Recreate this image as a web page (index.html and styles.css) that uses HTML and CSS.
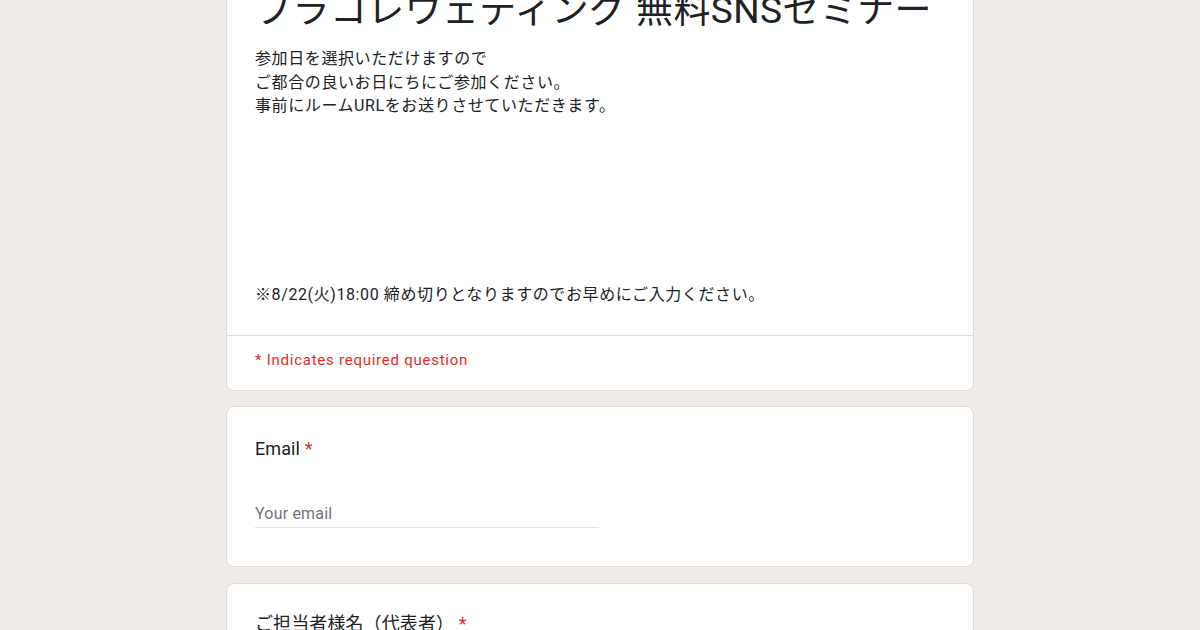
FILE: index.html
```html
<!DOCTYPE html>
<html lang="ja">
<head>
<meta charset="utf-8">
<link rel="stylesheet" href="styles.css">
</head>
<body>
<div class="page">
  <div class="card header">
    <div class="header-main">
      <h1 class="title">ブラコレウェディング 無料SNSセミナー</h1>
      <div class="desc">参加日を選択いただけますので
ご都合の良いお日にちにご参加ください。
事前にルームURLをお送りさせていただきます。







※8/22(火)18:00 締め切りとなりますのでお早めにご入力ください。</div>
    </div>
    <div class="required-note">* Indicates required question</div>
  </div>
  <div class="card question">
    <div class="q-title">Email <span class="star">*</span></div>
    <div class="input">Your email</div>
  </div>
  <div class="card question">
    <div class="q-title">ご担当者様名（代表者） <span class="star">*</span></div>
    <div class="input">Your answer</div>
  </div>
</div>
</body>
</html>
```
FILE: styles.css
```css
html, body {
  margin: 0;
  padding: 0;
  background: #f0ebe8;
  height: 630px;
  overflow: hidden;
}
body {
  font-family: Roboto, "Noto Sans CJK JP", sans-serif;
  color: #202124;
}
.page {
  width: 748px;
  margin: -14px auto 0;
  display: flex;
  flex-direction: column;
  gap: 15px;
}
.card {
  background: #fff;
  border: 1px solid #dadce0;
  border-radius: 8px;
}
.header-main {
  padding: 0 28px 28px 28px;
  border-bottom: 1px solid #dadce0;
}
.title {
  margin: 0;
  font-size: 37px;
  font-weight: 400;
  line-height: 48px;
  letter-spacing: 0.4px;
  color: #202124;
  white-space: nowrap;
}
.desc {
  margin-top: 12px;
  font-size: 16px;
  line-height: 23.6px;
  letter-spacing: 0.6px;
  white-space: pre-wrap;
}
.required-note {
  padding: 12px 28px 18px;
  font-size: 15px;
  line-height: 24px;
  color: #d93025;
  letter-spacing: 0.75px;
}
.question {
  padding: 30px 28px 38px;
}
.question + .question {
  margin-top: 1px;
  padding-top: 28px;
}
.q-title {
  font-size: 18px;
  line-height: 24px;
  letter-spacing: 0.1px;
}
.star {
  color: #d93025;
}
.input {
  margin-top: 41px;
  width: 344px;
  font-size: 16px;
  line-height: 24px;
  color: #70757a;
  letter-spacing: 0.2px;
  border-bottom: 1px solid #e0e0e0;
  padding-bottom: 1px;
}
```
